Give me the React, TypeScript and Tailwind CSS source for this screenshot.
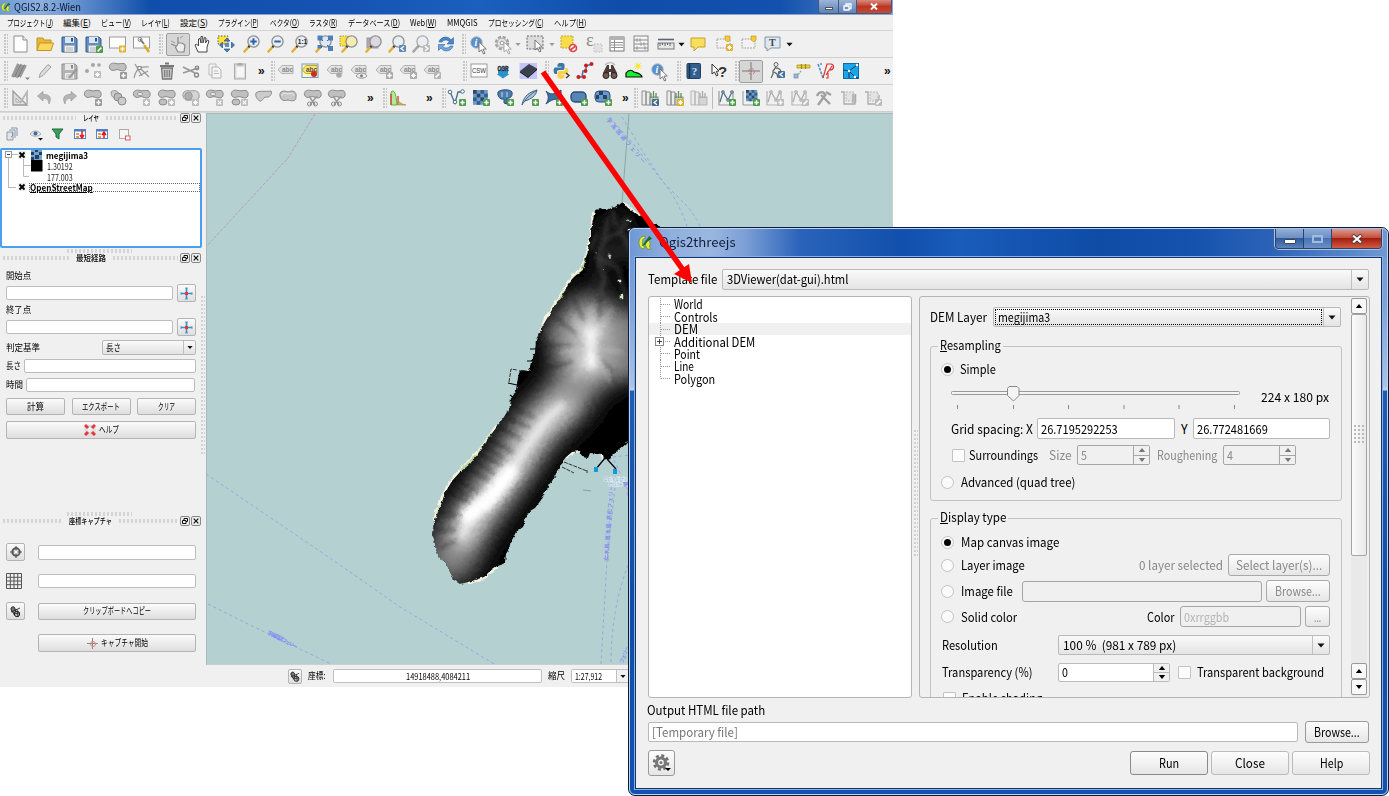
import React, { useLayoutEffect, useRef, useState } from 'react';

/* ---------- text that is fitted to a column width ---------- */
function T({ w, c = '', children }: { w: number; c?: string; children: React.ReactNode }) {
  const ref = useRef<HTMLSpanElement>(null);
  const [s, setS] = useState(1);
  useLayoutEffect(() => {
    if (ref.current) setS(w / ref.current.offsetWidth);
  }, [w]);
  return (
    <span className="inline-block shrink-0 whitespace-nowrap" style={{ width: w }}>
      <span ref={ref} className={'inline-block origin-left ' + c} style={{ transform: `scaleX(${s})` }}>
        {children}
      </span>
    </span>
  );
}

/* ---------- icon parts ---------- */
const Blob = ({ y = 0 }: { y?: number }) => (
  <path transform={`translate(0 ${y})`} d="M3.5 9C2.500 4.500 7 3.500 10 4.500C13 5.500 15 4 18 4.500C21.500 6 20.500 12 17 12C14 12 12 9.500 9 11C7 12 4.500 11.500 3.500 9Z" fill="#c0c0c0" stroke="#8a8a8a" />
);
const Badge = ({ f = '#bdbdbd', x = 14, y = 13, k = '+' }: { f?: string; x?: number; y?: number; k?: string }) => (
  <g transform={`translate(${x} ${y})`}>
    <rect x="0" y="0" width="7" height="7" rx="1" fill={f} />
    {k === '+' && <path d="M3.5 1.3V5.7M1.3 3.5H5.7" stroke="#fff" strokeWidth="1.5" />}
    {k === '*' && <path d="M3.5 1V6M1 3.5H6M1.8 1.8L5.2 5.2M5.2 1.8L1.8 5.2" stroke="#fff" strokeWidth="0.9" />}
    {k === 'x' && <path d="M1.7 1.7L5.3 5.3M5.3 1.7L1.7 5.3" stroke="#fff" strokeWidth="1.2" />}
    {k === '/' && <path d="M1.6 5.4L5.4 1.6" stroke="#fff" strokeWidth="1.5" />}
    {k === '<' && <path d="M5 1.3L2 3.5L5 5.7" stroke="#fff" strokeWidth="1.3" fill="none" />}
    {k === '>' && <path d="M2 1.3L5 3.5L2 5.7" stroke="#fff" strokeWidth="1.3" fill="none" />}
  </g>
);
const Lens = ({ f = '#e9eef2', g = false, x = 0 }: { f?: string; g?: boolean; x?: number }) => (
  <g transform={`translate(${x} 0)`}>
    <path d="M4.5 19.5L9 14.5" stroke={g ? '#a5a5a5' : '#e2b035'} strokeWidth="2.6" strokeLinecap="round" />
    <path d="M8.4 15.2L10 13.5" stroke={g ? '#999' : '#333'} strokeWidth="2.2" />
    <circle cx="13.5" cy="9.5" r="5.6" fill={f} stroke={g ? '#aaa' : '#8c9196'} strokeWidth="1.3" />
  </g>
);
const Tag = ({ f = '#e3e3e3', s = '#b3b3b3', t = '#8a8a8a' }: { f?: string; s?: string; t?: string }) => (
  <g>
    <path d="M4 11L8 6.5H19V14.5H8Z" fill={f} stroke={s} />
    <text x="8" y="13" fontSize="6.5" fontWeight="bold" fill={t}>abc</text>
  </g>
);
const Floppy = ({ g = false }: { g?: boolean }) => (
  <g>
    <path d="M5 5H18L20 7V20H5Z" fill={g ? '#b5b5b5' : '#5f8fc4'} stroke={g ? '#8f8f8f' : '#31588a'} />
    <rect x="8" y="5" width="9" height="6" fill={g ? '#e8e8e8' : '#dce6f0'} />
    <rect x="14" y="6" width="2" height="3.5" fill={g ? '#888' : '#2c5284'} />
    <rect x="7.5" y="13.5" width="10" height="6.5" fill="#eee" stroke="#aaa" strokeWidth="0.7" />
    <path d="M9 16H16M9 18H16" stroke="#999" strokeWidth="0.7" />
  </g>
);
const Arr = ({ c = '#777' }: { c?: string }) => (
  <path d="M10 7L10 17L12.5 14.8L14.5 19L16 18.2L14 14.2L17.3 14Z" fill="#fff" stroke={c} strokeWidth="1" />
);
const VLine = ({ g = false }: { g?: boolean }) => (
  <g fill="none" stroke={g ? '#aaa' : '#4c7088'} strokeWidth="1.2">
    <path d="M4 5V19H18V6" stroke={g ? '#b5b5b5' : '#999'} />
    <path d="M5 16L8 6L13 14L17 6" />
    <circle cx="8" cy="6" r="1.2" fill="#fff" /><circle cx="13" cy="14" r="1.2" fill="#fff" /><circle cx="17" cy="6" r="1.2" fill="#fff" />
  </g>
);
const Books = ({ g = false }: { g?: boolean }) => (
  <g>
    <path d="M4 5H8V19H4ZM8 6H12V19H8Z" fill="#ececec" stroke={g ? '#b5b5b5' : '#8e8e8e'} />
    <rect x="12" y="11" width="8" height="8" fill={g ? '#d5d5d5' : '#bcd0c4'} stroke={g ? '#b5b5b5' : '#8e8e8e'} />
    <path d="M13 12V7M15.5 12V5M18 12V7" stroke={g ? '#aaa' : '#5f8f5c'} strokeWidth="1.3" />
  </g>
);
const Checker = ({ x = 4, y = 4, n = 3.7 }: { x?: number; y?: number; n?: number }) => (
  <g transform={`translate(${x} ${y})`}>
    <rect width={n * 4} height={n * 4} fill="#6d99c9" />
    {[0, 1, 2, 3].map((r) =>
      [0, 1, 2, 3].map((c) => ((r + c) % 2 === 0 ? <rect key={r * 4 + c} x={c * n} y={r * n} width={n} height={n} fill={r === c ? '#2a4668' : '#345f8f'} /> : null)),
    )}
  </g>
);
const G = '#4f9c4c';

const ICONS: Record<string, React.ReactNode> = {
  new: <><path d="M6 4H15L19 8V20H6Z" fill="#fff" stroke="#8c8c8c" /><path d="M15 4V8H19" fill="#eee" stroke="#8c8c8c" /></>,
  open: <><path d="M4 6H10L11 8H18V18.500H4Z" fill="#e9b83a" stroke="#c69420" /><path d="M6.500 11H20.500L18 18.500H4Z" fill="#fbd75c" stroke="#c69420" /></>,
  save: <Floppy />,
  saveas: <><Floppy /><Badge f={G} k="/" x={15} y={14} /></>,
  compose: <><rect x="3.5" y="5" width="16" height="11" fill="#fff" stroke="#999" /><Badge f="#e0b02e" k="*" x={13} y={13.5} /></>,
  composer: <><rect x="3.5" y="5" width="16" height="11" fill="#fff" stroke="#999" /><path d="M10 7L14 12" stroke="#777" strokeWidth="2" /><circle cx="10" cy="7.5" r="2" fill="none" stroke="#888" /><path d="M14 13L19 20" stroke="#dba92c" strokeWidth="2.6" /></>,
  touch: <><path d="M5 12L10 14M12 5V12M12 12L9.500 15.500L12 20H18L19 13L16 11L12.500 11" fill="#eee" stroke="#888" strokeWidth="1.200" /><path d="M5 9L9 11M14 6L17 4" stroke="#999" /></>,
  hand: <path d="M8 20L5 13L6.5 12L8.5 14V7L10 6.5L11 11V4.5L12.7 4.5L13 11L14.5 5.5L16 6L15.5 11L17.5 8L19 9L17 15V20Z" fill="#fff" stroke="#444" />,
  pan: <><rect x="4" y="4" width="10" height="8" fill="#ffe23e" stroke="#555" strokeDasharray="1.5 1.5" /><path d="M13 6L16 9H10ZM13 20L10 17H16ZM5.5 13L8.5 10V16ZM20.5 13L17.5 10V16Z" fill="#4c7cba" stroke="#2d578f" strokeWidth="0.7" /><path d="M11 11h4v4h-4z" fill="#5c8cc9" /></>,
  zin: <><Lens x={1} /><path d="M14.5 6.3V12.7M11.3 9.5H17.7" stroke="#2f62ab" strokeWidth="2" /></>,
  zout: <><Lens x={1} /><path d="M11.3 9.5H17.7" stroke="#2f62ab" strokeWidth="2" /></>,
  z11: <><Lens x={1} /><text x="10.8" y="12" fontSize="6.5" fontWeight="bold" fill="#222">1:1</text></>,
  zfull: <><Lens f="#dfe8f0" /><path d="M5.500 3.500h5v5h-5zM16 3.500h5v5h-5zM16 14h5v5h-5zM5.500 13h3.500v3.500h-3.500z" fill="#4f80bb" /><path d="M9 7l2 2M17 7l-2 2M17 15l-2-2" stroke="#3a6aa5" /></>,
  zsel: <><rect x="4" y="4" width="8" height="10" fill="#ffe23e" stroke="#997" strokeDasharray="1.5 1" /><Lens f="#f5edae" x={2} /></>,
  zlay: <><rect x="6" y="6" width="11" height="10" fill="#b4a6c0" stroke="#999" /><Lens f="#ddd8de" x={1} /></>,
  zlast: <><Lens /><Badge f="#5d88ba" k="<" /></>,
  znext: <><Lens g /><Badge k=">" /></>,
  refresh: <><path d="M5 10C6 5 14 3 17 8L19.5 5.5V12H13L15.3 9.7C13 7 9 8 8 10Z" fill="#4a87c9" stroke="#2d65a5" strokeWidth="0.6" /><path d="M19 14C18 19 10 21 7 16L4.5 18.5V12.5H11L8.7 14.6C11 17 15 16 16 14Z" fill="#73a7dc" stroke="#2d65a5" strokeWidth="0.6" /></>,
  info: <><circle cx="10.5" cy="10.5" r="5.8" fill="#5a90c9" stroke="#b2bfcc" /><text x="8.6" y="14.2" fontSize="10" fontWeight="bold" fontStyle="italic" fill="#fff" fontFamily="Liberation Serif">i</text><g transform="translate(3 3)"><Arr /></g></>,
  action: <><circle cx="11" cy="11" r="6" fill="none" stroke="#a4a4a4" strokeWidth="2.500" strokeDasharray="3.100 1.600" /><circle cx="11" cy="11" r="4.800" fill="#e3e3e3" stroke="#aaa" /><circle cx="11" cy="11" r="1.8" fill="#fff" stroke="#999" /><g transform="translate(3 3)"><Arr c="#aaa" /></g></>,
  select: <><rect x="4" y="4" width="16" height="13" fill="#dcdcdc" stroke="#666" strokeDasharray="2 1.4" /><g transform="translate(2 1)"><Arr /></g></>,
  desel: <><rect x="4" y="4" width="12" height="12" fill="#f8dd4b" stroke="#c5a934" strokeDasharray="2 1" /><circle cx="16" cy="16" r="3.500" fill="#fff" stroke="#da4744" strokeWidth="1.7" /><path d="M13.5 18L18.5 14" stroke="#da4744" strokeWidth="1.7" /></>,
  eps: <><text x="4" y="14" fontSize="18" fill="#8a8a8a" fontFamily="Liberation Serif">ε</text><rect x="12" y="12" width="8" height="8" fill="#e2e2e2" stroke="#bbb" strokeDasharray="1.5 1.5" /></>,
  table: <><rect x="5" y="5" width="14" height="14" fill="#fff" stroke="#777" /><rect x="5" y="5" width="14" height="3" fill="#b2b2b2" /><path d="M6 10.5H18M6 13H18M6 15.5H18M9.5 8V19" stroke="#888" strokeWidth="0.9" /></>,
  abacus: <><rect x="5" y="4" width="14" height="15" fill="#f6f6f6" stroke="#888" /><path d="M5 8H19M5 12H19M5 16H19" stroke="#888" /><path d="M8 6.5v3M11 6.5v3M15 10.5v3M8 14.5v3M16 14.5v3M12 10.5v3" stroke="#aaa" strokeWidth="2" /></>,
  measure: <><path d="M4 7.500H20" stroke="#5b6670" strokeWidth="1.600" /><rect x="4" y="11" width="16" height="6" fill="#e7e7e7" stroke="#777" /><path d="M6 11v3M8.5 11v2M11 11v3M13.5 11v2M16 11v3" stroke="#666" /></>,
  tip: <path d="M5 6H19V15H12L8 19V15H5Z" fill="#f9df5c" stroke="#c4a02c" strokeLinejoin="round" />,
  bmnew: <><rect x="5" y="7" width="13" height="9" fill="#f2f2f2" stroke="#999" strokeDasharray="1.6 1.2" /><path d="M13 4h5v4l-2 2l-3-2z" fill="#f3cb3a" stroke="#bb9420" strokeWidth="0.6" /><Badge f="#e0b02e" k="*" x={14} y={12} /></>,
  bm: <><rect x="5" y="7" width="13" height="9" fill="#f2f2f2" stroke="#999" strokeDasharray="1.6 1.2" /><path d="M14 4h5v4l-2 2l-3-2z" fill="#f3cb3a" stroke="#bb9420" strokeWidth="0.6" /></>,
  tbox: <><path d="M4 5H19V16H10L6 19V16H4Z" fill="#dfe8f0" stroke="#8298ac" /><text x="8" y="14" fontSize="10" fontWeight="bold" fill="#444" fontFamily="Liberation Serif">T</text></>,
  pencils: <><path d="M4.500 18L10.500 5M8 18.500L14 5.500M11.500 18L17.500 6" stroke="#9a9a9a" strokeWidth="3" /><path d="M6.500 18L12.500 5.500M10 18.500L16 6" stroke="#707070" strokeWidth="0.900" /><path d="M17 18.500h5l-2.5 2.5z" fill="#888" /></>,
  pencil: <path d="M6 18.5L7.5 14L15 5.5L18 8L10 16.5Z" fill="#ddd" stroke="#a0a0a0" />,
  gsave: <><Floppy g /><path d="M12 19L20 10" stroke="#999" strokeWidth="2" /></>,
  dots: <><circle cx="6" cy="12" r="2" fill="#a5a5a5" /><circle cx="12" cy="6" r="2" fill="#a5a5a5" /><circle cx="18" cy="6" r="1.8" fill="#a5a5a5" /><Badge k="*" x={13} y={12} /></>,
  blobmove: <><Blob /><Badge f="#999" k="+" /></>,
  node: <><path d="M4 19C6 10 10 7 19 8" fill="none" stroke="#999" strokeWidth="1.2" /><path d="M5 5L12 17M18 12L9 17M11 10L19 18" stroke="#999" strokeWidth="1.3" /><rect x="8" y="7.5" width="3" height="3" fill="#fff" stroke="#888" /></>,
  trash: <><path d="M6.5 9H17.5L16.5 20H7.5Z" fill="#c5c5c5" stroke="#777" strokeWidth="1.3" /><path d="M5 7H19M10 4.5H14" stroke="#777" strokeWidth="2" /><path d="M9.7 11V18M12 11V18M14.4 11V18" stroke="#777" strokeWidth="1.1" /></>,
  cut: <><path d="M4 8L16 14M4 14L19 9" stroke="#999" strokeWidth="1.8" /><circle cx="17.5" cy="16" r="2" fill="none" stroke="#888" strokeWidth="1.4" /><circle cx="18" cy="9" r="1.8" fill="none" stroke="#888" strokeWidth="1.2" /></>,
  copy: <><path d="M6 5H13V16H6Z" fill="#f2f2f2" stroke="#bbb" /><path d="M9 8H15L18 11V19H9Z" fill="#f5f5f5" stroke="#b0b0b0" /><path d="M11 12h4M11 14.5h5" stroke="#bbb" /></>,
  paste: <><rect x="6.5" y="5" width="11" height="15" fill="#ddd" stroke="#aaa" /><rect x="8.5" y="8" width="7.5" height="10" fill="#f6f6f6" /><rect x="9.5" y="4" width="5" height="2.6" fill="#aaa" /></>,
  tag: <Tag />,
  taghl: <><rect x="4" y="5" width="16" height="13.5" fill="#fff6c4" stroke="#6c9ad2" /><Tag f="#f9e36b" s="#c9a527" t="#555" /><circle cx="16" cy="15" r="3" fill="#cf2c24" /></>,
  tagpin: <><Tag /><circle cx="16" cy="16" r="2.8" fill="#aaa" /></>,
  tageye: <><Tag /><path d="M9 17C12 13 18 13 20 17C17 20 12 20 9 17Z" fill="#eee" stroke="#999" /><circle cx="14.5" cy="16.8" r="1.6" fill="#888" /></>,
  tagb: <><Tag /><Badge f="#aaa" k="+" /></>,
  tagr: <><Tag /><Badge f="#aaa" k="*" /></>,
  tagc: <><Tag /><Badge k="/" f="#b5b5b5" /></>,
  csw: <><rect x="4" y="5" width="16" height="13" fill="#fff" stroke="#999" /><text x="5" y="14" fontSize="7" textLength="14" lengthAdjust="spacingAndGlyphs" fill="#333">CSW</text></>,
  ocr: <><path d="M7 11H17V15H18.5L12 19.5L5.500 15H7Z" fill="#2a93cb" /><text x="6.500" y="11.500" fontSize="6.500" fontWeight="bold" textLength="11" lengthAdjust="spacingAndGlyphs" fill="#1b2f45" stroke="#1b2f45" strokeWidth="0.500">OGR</text></>,
  q3js: <><rect x="3.500" y="4" width="17.500" height="16" fill="#c3c5fa" /><path d="M4 12L13 5L21 9.500L12 17.5Z" fill="#39404c" /><path d="M4 12L12 17.5L21 9.500V11L12 19L4 13.5Z" fill="#10141c" /></>,
  python: <><path d="M12 4C8 4 8.5 6 8.5 7.8H12.5V8.5H6.5C4 8.5 4 15 6.5 15H8V12.5Q8 11 10 11H14Q15.5 11 15.5 9V6C15.5 4 13 4 12 4Z" fill="#3b74ab" /><path d="M12 19.8C15.5 19.8 15.5 18 15.5 16H12V15.3H17.5C20 15.3 20 9 17.5 9H16.3V10.5Q16 12 14 12H10.5Q8.5 12 8.5 14V17.5C8.5 19.5 11 19.8 12 19.8Z" fill="#fbd244" /><path d="M17 14L20 16.5L17 19" fill="none" stroke="#333" strokeWidth="1.3" /></>,
  road: <><path d="M5 18H9L10 12H13L13 7L19 5" fill="none" stroke="#4d76b0" strokeWidth="1.6" /><circle cx="5.5" cy="18" r="2.1" fill="#c9201d" /><circle cx="11" cy="18" r="2" fill="#c9201d" /><circle cx="12.5" cy="12" r="2" fill="#c9201d" /><circle cx="13" cy="6.5" r="2" fill="#c9201d" /><circle cx="18.5" cy="5" r="2" fill="#c9201d" /></>,
  bino: <><path d="M9 6H11V10H13V6H15L19 14V18H13V13H11V18H5V14Z" fill="#4b3a35" /><circle cx="8" cy="16.5" r="3" fill="#735a50" stroke="#222" /><circle cx="16" cy="16.5" r="3" fill="#735a50" stroke="#222" /><path d="M7 6C10 3 14 3 17 6" stroke="#bbb" fill="none" strokeWidth="1.5" /></>,
  hill: <><path d="M4 18V14C7 10 10 11 12 13C14 14 19 14 20 18Z" fill="#15f12c" stroke="#111" strokeWidth="1.2" /><circle cx="16" cy="7" r="2.2" fill="#ffe637" /><path d="M16 3v8M12 7h8M13 4l6 6M19 4l-6 6" stroke="#ffe637" strokeWidth="0.8" /></>,
  help: <><rect x="5" y="4.5" width="13.5" height="15" rx="1" fill="#34608f" stroke="#1f3f63" /><path d="M7.5 5V19" stroke="#16324f" strokeWidth="1.5" /><text x="9.7" y="16" fontSize="11" fontWeight="bold" fill="#cfe0f2" fontFamily="Liberation Serif">?</text></>,
  whats: <><path d="M5 5V15L7.5 13L9.5 17L11 16L9.3 12.3L12 12Z" fill="#fff" stroke="#333" /><text x="11" y="18" fontSize="15" fontWeight="bold" fill="#333">?</text></>,
  cross: <><path d="M12 3V21M3 12H21" stroke="#777" /><circle cx="12.5" cy="12.5" r="3" fill="none" stroke="#d9706c" strokeDasharray="3 1.500" /></>,
  person: <><circle cx="11" cy="5.5" r="2" fill="none" stroke="#666" /><path d="M11 8L8 12V15L6 19M11 9C15 9 16 12 16 13M9 13L12 15L13 19" fill="none" stroke="#666" strokeWidth="1.3" /><Badge f="#47729b" k="<" x={13} y={12} /></>,
  gps: <><path d="M7 6H20V9H7Z" fill="#efd336" stroke="#a18b1a" strokeWidth="0.700" /><path d="M11.500 5V10M15.500 5V10" stroke="#a18b1a" strokeWidth="1.200" /><path d="M11 12L7 17" stroke="#8aa" strokeWidth="1.5" strokeDasharray="1.5 1" /><rect x="4" y="15" width="4" height="4" fill="#9db9d6" stroke="#6688a8" strokeWidth="0.700" /></>,
  trace: <><path d="M4 5L9 19M6 5H8" fill="none" stroke="#4c8ac5" strokeWidth="1.500" strokeDasharray="3 1" /><path d="M9 19L13 5H17C21 6 20 11 16 11M12 16L18 7M12 19H14V12" fill="none" stroke="#d9372f" strokeWidth="1.200" /></>,
  topo: <><rect x="4.5" y="4.5" width="15" height="15" fill="#1ba5ed" stroke="#126d9f" /><path d="M4.5 11L10 12L19.5 5M10 12L16 18L19 19M10 19L10 12" fill="none" stroke="#0d3957" /><circle cx="10" cy="12" r="1.2" fill="#fff" /><circle cx="16" cy="18" r="1.2" fill="#fff" /><circle cx="18" cy="6" r="1.2" fill="#fff" /></>,
  ruler: <><path d="M5 5V19H19Z" fill="#dcdcdc" stroke="#999" strokeWidth="1.3" /><path d="M8 12V16H12Z" fill="#f0f0f0" stroke="#aaa" /><path d="M12 17L19 6V18" stroke="#b5b5b5" strokeWidth="1.800" fill="none" /></>,
  undo: <path d="M4.5 10L10 5.5V8.5C17 8 19 12 16 18C15.5 14 14 12.3 10 12.3V15Z" fill="#b5b5b5" stroke="#999" strokeWidth="0.7" />,
  redo: <path d="M19.5 10L14 5.5V8.5C7 8 5 12 8 18C8.5 14 10 12.3 14 12.3V15Z" fill="#b5b5b5" stroke="#999" strokeWidth="0.7" />,
  b1: <><Blob /><Badge f="#999" /></>,
  b2: <><path d="M5 6C8 3 13 5 13 9C13 14 5 14 5 6Z" fill="#ccc" stroke="#999" /><circle cx="12" cy="11" r="4" fill="#bbb" stroke="#888" /><circle cx="16" cy="15" r="4" fill="#ccc" stroke="#888" /></>,
  b3: <><Blob /><ellipse cx="10" cy="8" rx="2.6" ry="1.6" fill="#f0f0f0" stroke="#999" /><Badge k="*" x={13} /></>,
  b4: <><Blob /><ellipse cx="8" cy="16" rx="4" ry="3" fill="#c0c0c0" stroke="#8a8a8a" /><Badge k="*" x={13} /></>,
  b5: <><path d="M4 10C3 5 8 4 12 5C16 4 21 5 20 11C20 14 15 14 12 14C8 15 5 14 4 10Z" fill="#d5d5d5" stroke="#999" /><circle cx="9.500" cy="10" r="3.800" fill="#b0b0b0" stroke="#999" /><Badge k="*" x={13} /></>,
  b6: <><Blob /><ellipse cx="10" cy="8" rx="2.6" ry="1.6" fill="#f0f0f0" stroke="#999" /><Badge k="x" x={13} /></>,
  b7: <><Blob /><ellipse cx="8" cy="16" rx="4" ry="3" fill="#c0c0c0" stroke="#8a8a8a" /><Badge k="x" x={13} /></>,
  b8: <><path d="M4 7C8 4 12 6 19 5C21 8 17 12 14 11C11 11 10 17 7 14.500C5 13 3 10 4 7Z" fill="#ccc" stroke="#8a8a8a" /></>,
  b9: <><path d="M4 10C3 5 8 4 12 6C16 4 21 5 20 11C20 16 15 15 12 14C8 15 5 15 4 10Z" fill="#c6c6c6" stroke="#8a8a8a" /><path d="M6 10C6 7 9 7 12 8C16 7 18 8 18 10" fill="none" stroke="#eee" /></>,
  b10: <><Blob /><path d="M8 10L14 19M16 10L9 19" stroke="#999" strokeWidth="1.5" /><circle cx="8.5" cy="18" r="2" fill="none" stroke="#888" /><circle cx="14.5" cy="18" r="2" fill="none" stroke="#888" /></>,
  hist: <><path d="M5 19V6C8 3 10 7 11 19Z" fill="#b7e79f" stroke="#53b935" /><path d="M5 19V8M12 19V10" stroke="#dd3730" strokeWidth="1.3" /><path d="M12 16C14 15 14 18 20 19H12Z" fill="#8fd45f" stroke="#dd6a30" strokeWidth="0.600" /></>,
  addv: <><path d="M5 6L10 17L13 6H17" fill="none" stroke="#446d8b" strokeWidth="1.3" /><circle cx="5" cy="6" r="1.8" fill="#fff" stroke="#446d8b" /><circle cx="10" cy="16" r="1.8" fill="#fff" stroke="#446d8b" /><circle cx="17.500" cy="5.5" r="1.8" fill="#fff" stroke="#446d8b" /><Badge f={G} /></>,
  addr: <><Checker /><Badge f={G} /></>,
  addp: <><path d="M5 6C8 3 17 3 19 6C20 10 17 13 14 12V18L11 17V13C7 14 4 10 5 6Z" fill="#4c7caf" stroke="#274f7c" /><path d="M9 6V11M14 6V11" stroke="#c7d9ea" /><Badge f={G} /></>,
  adds: <><path d="M4 19C6 9 12 6 19 4C18 10 13 13 7 15" fill="#a9c2d8" stroke="#3f6587" /><path d="M4 19C8 12 13 8 19 4" fill="none" stroke="#3f6587" /><Badge f={G} /></>,
  addm: <><path d="M4 5C8 9 12 9 19 4V14C13 12 9 14 4 18C7 13 7 10 4 5Z" fill="#3f6f9f" stroke="#244b73" /><Badge f={G} /></>,
  addo: <><rect x="4" y="6" width="15" height="10" rx="4" fill="#5784b5" stroke="#2a4f7a" strokeWidth="1.4" /><Badge f={G} /></>,
  addw: <><g><rect x="4" y="5" width="15" height="11" rx="4" fill="#6b98c8" stroke="#2a4f7a" /><path d="M8 5h4v4h-4zM12 9h4v4h-4zM5 9h3v4h-3z" fill="#274567" /></g><Badge f={G} /></>,
  bk1: <><Books /><Badge f="#456b90" k="<" /></>,
  bk2: <><Books /><Badge f="#e0b02e" k="*" /></>,
  bk3: <Books g />,
  v1: <><VLine /><Badge f={G} /></>,
  v2: <><path d="M4 5V19H18V6" stroke="#999" fill="none" /><Checker x={7} y={4} n={2.8} /><Badge f={G} /></>,
  v3: <><VLine g /><Badge /></>,
  v4: <><VLine g /><Badge k="/" /></>,
  tools: <path d="M6 19L14 8M9 9L18 18M5 10C7 5 12 5 13 9M14 6L19 9" fill="none" stroke="#a0a0a0" strokeWidth="2.4" />,
  r1: <><path d="M4 6H7V18H18V9" fill="none" stroke="#aaa" strokeWidth="1.3" /><path d="M9 6h8v9h-8z" fill="#e2e2e2" stroke="#bbb" strokeDasharray="2 1" /><path d="M16 8v9M18.5 8v9" stroke="#aaa" strokeWidth="1.5" /></>,
  r2: <><path d="M4 6H7V18H18V9" fill="none" stroke="#aaa" strokeWidth="1.3" /><path d="M9 6h8v9h-8z" fill="#e2e2e2" stroke="#bbb" strokeDasharray="2 1" /><Badge k="/" /></>,
  more: <text x="9" y="15.500" fontSize="12" fontWeight="bold" fill="#111">»</text>,
};

function I({ k, c = 'w-[24.4px]', on = false }: { k: string; c?: string; on?: boolean }) {
  return (
    <span className={'flex h-6 shrink-0 items-center justify-center ' + c}>
      <span className={on ? 'flex h-[23px] w-[24px] items-center justify-center rounded-[2px] border border-[#a0a0a0] bg-[#d6d6d6]' : 'flex'}>
        <svg width="22" height="22" viewBox="1 1 22 22" className="shrink-0" fontFamily="Liberation Sans">{ICONS[k]}</svg>
      </span>
    </span>
  );
}
const Dd = ({ g = false, c = 'w-2' }: { g?: boolean; c?: string }) => (
  <svg viewBox="0 0 8 5" className={'h-[5px] shrink-0 ' + c}><path d="M0.5 0.5H7.5L4 4.5Z" fill={g ? '#999' : '#111'} /></svg>
);
const Grip = ({ c = 'w-[12px] pl-1' }: { c?: string }) => (
  <span className={'flex h-6 shrink-0 items-center ' + c}>
    <span className="h-[20px] w-[4px] shrink-0 bg-[radial-gradient(circle_at_1px_1px,#c6c6c6_0.7px,transparent_1px)] bg-[length:3px_3px]" />
  </span>
);
const Bar = ({ children }: { children: React.ReactNode }) => (
  <div className="flex h-[27px] items-center overflow-hidden border-b border-[#cfcfcf] bg-[#f0f0f0] pl-[4px]">{children}</div>
);
const seq = (s: string) => s.split(' ').map((k, i) => <I key={i} k={k} />);

const QLogo = ({ c }: { c: string }) => (
  <svg viewBox="0 0 16 16" className={'shrink-0 ' + c}>
    <path d="M7 1C1 2 0 8 2 12C3 15 7 15 8 13C5 13 4 9 5 6C5 4 7 3 8 3Z" fill="#e4ee3c" stroke="#6b8c1c" strokeWidth="0.8" />
    <path d="M8 6C13 5 14 9 12 12L14 15H10L8 11Z" fill="#e4ee3c" stroke="#6b8c1c" strokeWidth="0.8" />
    <path d="M4 12L12 1L15 4L11 6L8 10Z" fill="#1d6b2c" />
  </svg>
);

const MENU: [string, string, number, number][] = [
  ['プロジェクト', 'J', 46, 10], ['編集', 'E', 28, 10], ['ビュー', 'V', 30, 10], ['レイヤ', 'L', 29, 10], ['設定', 'S', 28, 10],
  ['プラグイン', 'P', 41, 11], ['ベクタ', 'O', 29, 10], ['ラスタ', 'R', 29, 10], ['データベース', 'D', 52, 10], ['Web', 'W', 27, 10],
  ['MMQGIS', '', 31, 10], ['プロセッシング', 'C', 56, 10], ['ヘルプ', 'H', 32, 10],
];

/* ---------- dock widgets ---------- */
const Dots = () => <span className="h-[4px] flex-1 bg-[radial-gradient(circle_at_1px_1px,#cacaca_0.6px,transparent_1px)] bg-[length:4px_2px]" />;
const Dock = ({ t, w, c }: { t: string; w: number; c: string }) => (
  <div className={'flex h-[12px] w-[201px] items-center gap-[7px] pl-[3px] text-[8px] leading-[12px] ' + c}>
    <Dots /><T w={w} c="font-medium">{t}</T><Dots />
    <span className="-ml-[5px] flex gap-px">
      <svg width="10" height="10" viewBox="0 0 10 10"><rect x="0.5" y="0.5" width="9" height="9" rx="1.5" fill="#eee" stroke="#888" /><path d="M4 4V2.5H7.5V5.5H6M2.5 4.5H6V7.5H2.5Z" fill="none" stroke="#111" /></svg>
      <svg width="10" height="10" viewBox="0 0 10 10"><rect x="0.5" y="0.5" width="9" height="9" rx="1.5" fill="#eee" stroke="#888" /><path d="M2.7 2.7L7.3 7.3M7.3 2.7L2.7 7.3" stroke="#111" strokeWidth="1.2" /></svg>
    </span>
  </div>
);
const Inp = ({ c }: { c: string }) => <div className={'shrink-0 rounded-[2px] border border-[#bdbdbd] bg-white ' + c} />;
const SBtn = ({ c, children }: { c: string; children: React.ReactNode }) => (
  <div className={'flex shrink-0 items-center justify-center rounded-[2px] border border-[#b4b4b4] bg-gradient-to-b from-[#fbfbfb] to-[#dedede] ' + c}>{children}</div>
);
const Plus = () => (
  <svg width="13" height="13" viewBox="0 0 13 13"><path d="M6.5 1V12M1 6.5H12" stroke="#3d8fcb" strokeWidth="1.7" /><path d="M5 1H8M5 12H8M1 5V8M12 5V8" stroke="#3d8fcb" strokeWidth="0.8" /><rect x="5" y="5" width="3" height="3" fill="#e33" /></svg>
);
const Mouse = () => (
  <svg width="13" height="13" viewBox="0 0 13 13"><path d="M2 4C2 1 6 1 6 4L7 8C6 10 3 8 2 4Z" fill="#777" stroke="#222" /><circle cx="8" cy="9" r="2.7" fill="#bbb" stroke="#222" /><path d="M2 7L11 3M4 9L11 8M8 4L9 12" stroke="#222" strokeWidth="0.8" /></svg>
);

function LeftPanel() {
  return (
    <div className="flex h-full w-[206px] shrink-0 flex-col text-[9px] leading-[12px]">
      <Dock t="レイヤ" w={16} c="-mt-px" />
      <div className="flex h-[20px] items-center pl-[2px]">
        <svg width="140" height="16" viewBox="2 0 140 16">
          <path d="M7 6H13V14H7Z" fill="#dce4ec" stroke="#999" /><path d="M9 4H15V12M11 2H17V10M11 11C13 11 13 8 12 6" fill="none" stroke="#8295a8" />
          <path d="M30 8C33 4 38 4 41 8C38 11 33 11 30 8Z" fill="#e3e8ee" stroke="#aaa" /><circle cx="35.5" cy="7.5" r="2" fill="#3f6e9d" /><path d="M38 12h5l-2.500 2.500z" fill="#111" />
          <path d="M52 3H63L59 8V13L56 11V8Z" fill="#3da05a" stroke="#216b39" />
          <rect x="74.500" y="3.500" width="11" height="9" fill="#fff" stroke="#5783c4" /><path d="M75 4.500H85" stroke="#4a7cc7" strokeWidth="2" /><path d="M76 8h3M76 11h3" stroke="#e27a2b" strokeWidth="1.500" /><path d="M82 5V10M80 9L82 12L84 9" stroke="#e11" strokeWidth="1.500" fill="none" />
          <rect x="96.500" y="3.500" width="11" height="9" fill="#fff" stroke="#5783c4" /><path d="M97 4.500H107" stroke="#4a7cc7" strokeWidth="2" /><path d="M98 8h3M98 11h3" stroke="#e27a2b" strokeWidth="1.500" /><path d="M104 12V7M102 9L104 6L106 9" stroke="#e11" strokeWidth="1.500" fill="none" />
          <rect x="119.500" y="3.500" width="9" height="9" fill="#f5f5f5" stroke="#aaa" /><rect x="125.500" y="10" width="4.500" height="4" fill="#fff" stroke="#dd5c5c" />
        </svg>
      </div>
      <div className="mt-[4px] flex h-[100px] w-[202px] flex-col rounded-[2px] border-2 border-[#4aa0f0] bg-white text-[8.500px] leading-[11px]">
        <div className="flex">
          <svg width="42" height="43" viewBox="0 0 42 43" className="shrink-0">
            <path d="M6.500 7V38M6.500 37.500H14M9 4.500H16M21.500 9V26.500M21.500 15.500H29M21.500 26.500H27" stroke="#bbb" fill="none" />
            <rect x="3.500" y="1.500" width="6" height="6" fill="#fff" stroke="#999" /><path d="M5 4.500H8" stroke="#444" />
            <rect x="16" y="1" width="8" height="8" fill="#f0f0f0" /><path d="M17.500 2.500L22.500 7.500M22.500 2.500L17.500 7.500" stroke="#000" strokeWidth="1.900" />
            <rect x="16" y="33" width="8" height="8" fill="#f0f0f0" /><path d="M17.500 34.500L22.500 39.500M22.500 34.500L17.500 39.500" stroke="#000" strokeWidth="1.900" />
            <g transform="translate(29 -1)"><rect width="11" height="11" fill="#79a2cc" /><path d="M0 3h3v3h-3zM4 0h3v3h-3zM4 6h4v4h-4zM8 3h3v3h-3zM0 8h3v3h-3z" fill="#24405f" /></g>
            <rect x="29" y="10" width="11.500" height="11.500" fill="#000" />
          </svg>
          <div className="-ml-[15px] flex flex-col">
            <span className="flex h-[11px] pl-[17px]"><T w={42} c="font-bold">megijima3</T></span>
            <span className="flex h-[11px] pl-[18px] text-[#222]"><T w={26}>1.30192</T></span>
            <span className="flex h-[11px] pl-[18px] text-[#222]"><T w={26}>177.003</T></span>
            <span className="flex h-[9px] w-[171px] items-center border border-dotted border-[#666]"><T w={63} c="font-bold underline">OpenStreetMap</T></span>
          </div>
        </div>
      </div>
      <div className="mt-px flex h-[3px] pl-[67px] pr-[74px]"><Dots /></div>
      <Dock t="最短経路" w={30} c="" />
      <div className="flex h-[191px]">
        <div className="flex w-[201px] flex-col pl-[6px]">
          <div className="mt-[6px] h-[12px]"><T w={25}>開始点</T></div>
          <div className="mt-[2px] flex items-center gap-[4px]"><Inp c="h-[14px] w-[167px]" /><SBtn c="h-[18px] w-[19px]"><Plus /></SBtn></div>
          <div className="mt-[2px] h-[12px]"><T w={25}>終了点</T></div>
          <div className="mt-[2px] flex items-center gap-[4px]"><Inp c="h-[14px] w-[167px]" /><SBtn c="h-[18px] w-[19px]"><Plus /></SBtn></div>
          <div className="mt-[4px] flex items-center">
            <T w={34}>判定基準</T>
            <div className="ml-[62px] flex h-[15px] w-[94px] items-center justify-between rounded-[2px] border border-[#b9b9b9] bg-gradient-to-b from-[#fafafa] to-[#e2e2e2] pl-[3px]">
              <T w={15}>長さ</T><span className="flex h-full w-[12px] items-center justify-center border-l border-[#c0c0c0]"><Dd c="w-[6px]" /></span>
            </div>
          </div>
          <div className="mt-[4px] flex h-[14px] items-center gap-[3px]"><T w={15}>長さ</T><Inp c="h-[14px] w-[172px]" /></div>
          <div className="mt-[5px] flex h-[14px] items-center gap-[3px]"><T w={17}>時間</T><Inp c="h-[14px] w-[169px]" /></div>
          <div className="mt-[6px] flex justify-between pr-[5px]">
            <SBtn c="h-[17px] w-[59px]"><T w={17}>計算</T></SBtn><SBtn c="h-[17px] w-[59px]"><T w={38}>エクスポート</T></SBtn><SBtn c="h-[17px] w-[59px]"><T w={17}>クリア</T></SBtn>
          </div>
          <SBtn c="mt-[6px] h-[18px] w-[190px] gap-[3px]">
            <svg width="12" height="12" viewBox="0 0 12 12"><circle cx="6" cy="6" r="4" fill="none" stroke="#ddd" strokeWidth="3" /><path d="M1 1L4 4M11 1L8 4M1 11L4 8M11 11L8 8" stroke="#e8373a" strokeWidth="3" /></svg>
            <T w={20}>ヘルプ</T>
          </SBtn>
        </div>
        <span className="mt-[32px] h-[159px] w-[4px] bg-[radial-gradient(circle_at_1px_1px,#c6c6c6_0.6px,transparent_1px)] bg-[length:3px_4px]" />
      </div>
      <div className="mt-[57px] flex h-[3px] pl-[67px] pr-[74px]"><Dots /></div>
      <Dock t="座標キャプチャ" w={43} c="mt-0" />
      <div className="flex flex-col pl-[6px]">
        <div className="mt-[16px] flex items-center"><SBtn c="h-[18px] w-[19px]"><svg width="12" height="12" viewBox="0 0 12 12"><circle cx="6" cy="6" r="3.800" fill="#ccc" stroke="#555" strokeWidth="1.800" /><path d="M6 0V12M0 6H12" stroke="#555" strokeWidth="1.200" /><rect x="4.500" y="4.500" width="3" height="3" fill="#fff" /></svg></SBtn><Inp c="ml-[13px] h-[15px] w-[158px]" /></div>
        <div className="mt-[12px] flex items-center"><svg width="16" height="16" viewBox="0 0 16 16"><path d="M.5 .5H15.500V15.500H.5ZM4.300 0V16M8 0V16M11.700 0V16M0 4.300H16M0 8H16M0 11.700H16" fill="none" stroke="#555" /></svg><Inp c="ml-[16px] h-[14px] w-[158px]" /></div>
        <div className="mt-[13px] flex items-center"><SBtn c="h-[18px] w-[19px]"><Mouse /></SBtn><SBtn c="ml-[13px] h-[17px] w-[158px]"><T w={68}>クリップボードへコピー</T></SBtn></div>
        <SBtn c="ml-[32px] mt-[14px] h-[18px] w-[158px] gap-[3px]"><svg width="11" height="11" viewBox="0 0 11 11"><path d="M5.500 0V11M0 5.500H11" stroke="#888" /><circle cx="6" cy="6" r="2.500" fill="none" stroke="#dc8683" /></svg><T w={47}>キャプチャ開始</T></SBtn>
      </div>
    </div>
  );
}

/* ---------- map ---------- */
const ISLE = 'M595 211L600 208L605 210L611 208L616 207L620 204L623 202L628 208L636 214L650 222L690 240V425L640 432L633 441L626 443L618 450L610 458L604 461L603 454L590 453L588 458L582 457L580 451L572 452L565 458L560 468L557 472L551 483L545 492L541 500L535 508L530 511L526 517L523 527L516 532L511 542L509 549L506 554L505 563L497 566L490 571L484 577L475 580L468 582L460 584L454 580L450 572L446 563L440 558L436 550L434 540L432 534L434 522L441 505L445 493L452 481L460 472L470 464L478 454L487 440L496 428L504 417L510 407L511 398L516 390L519 372L521 370L529 371L531 362L535 352L536 340L542 327L552 310L562 297L568 284L574 277L583 270L588 250L592 225Z';
function MapView() {
  return (
    <svg className="block h-[552px] w-[687px] bg-[#b5d0d0]" viewBox="206 113 687 552">
      <defs>
        <clipPath id="isle"><path d={ISLE} /></clipPath>
        <filter id="b2" x="-50%" y="-50%" width="200%" height="200%"><feGaussianBlur stdDeviation="2" /></filter>
        <filter id="b4" x="-50%" y="-50%" width="200%" height="200%"><feGaussianBlur stdDeviation="3.5" /></filter>
        <filter id="b7" x="-50%" y="-50%" width="200%" height="200%"><feGaussianBlur stdDeviation="8" /></filter>
        <filter id="b14" x="-50%" y="-50%" width="200%" height="200%"><feGaussianBlur stdDeviation="12" /></filter>
        <filter id="rough" x="-5%" y="-5%" width="110%" height="110%">
          <feTurbulence type="fractalNoise" baseFrequency="0.25" numOctaves="2" seed="4" result="n" />
          <feDisplacementMap in="SourceGraphic" in2="n" scale="3.5" xChannelSelector="R" yChannelSelector="G" />
        </filter>
      </defs>
      <path d="M315 114L288 158L206 247" fill="none" stroke="#b49cc6" strokeDasharray="3 1.500" />
      <g fill="none" stroke="#96a6e0" strokeDasharray="3 3">
        <path d="M610 117L635 146L663 182Q690 215 697 270" />
        <path d="M622 117L645 155L663 182L686 205Q704 225 712 262" />
        <path d="M206 474L330 558L400 607L496 665" />
        <path d="M208 604L250 625L331 664" />
        <path d="M617 470L607 560L601 664" />
        <path d="M628 565Q611 610 611 664" />
        <path d="M613 457L630 455M614 460L628 490" />
      </g>
      <path d="M629 113L622 203" stroke="#8ea5a6" />
      <g fill="#7c82f4" fontFamily="Noto Sans CJK JP" fontSize="5.500" fontWeight="500">
        <text transform="translate(606 120) rotate(50)" textLength="57">宇高国道フェリー</text>
        <text transform="translate(267 634) rotate(27)" textLength="33">宇高国道フェリー</text>
        <text transform="translate(608 561) rotate(-86)" textLength="76">女木島-男木島-高松フェリー</text>
        <text transform="translate(623 482) rotate(70)" textLength="16">高松</text>
        <text transform="translate(623 664) rotate(-70)" textLength="18">フェリー</text>
      </g>
      <g filter="url(#rough)">
        <path d="M594 212L591 235L587 254L582 269L573 276L560 297L545 320L540 335M497 426L480 450L459 472L448 486L438 508L435 520M623 203L640 217M468 583L485 577L497 567M566 457L574 451L582 451M602 460L603 454" fill="none" stroke="#f4f2e2" strokeWidth="3.500" />
        <path d="M587 256L582 271L573 278L556 305L548 320M492 433L478 454L460 471M440 505L437 515" fill="none" stroke="#b7d59c" strokeWidth="2" />
        <path d={ISLE} fill="#000" />
        <g clipPath="url(#isle)">
          <g filter="url(#b14)" fill="none" strokeLinecap="round">
            <path d="M452 558L468 525L500 482L535 430L570 395" stroke="#8c8c8c" strokeWidth="48" />
            <ellipse cx="590" cy="343" rx="38" ry="48" fill="#a8a8a8" />
            <ellipse cx="640" cy="345" rx="26" ry="36" fill="#777" />
          </g>
          <g filter="url(#b7)" fill="none" strokeLinecap="round">
            <path d="M463 536L480 508L510 472L535 432L565 404" stroke="#cfcfcf" strokeWidth="24" />
            <ellipse cx="591" cy="346" rx="16" ry="26" fill="#e8e8e8" />
            <path d="M591 350L552 330M591 350L628 370M591 350L625 325M577 385L562 405" stroke="#8d8d8d" strokeWidth="9" />
            <path d="M605 220L600 290M622 215L638 265M600 260L628 250" stroke="#3a3a3a" strokeWidth="8" />
          </g>
          <g filter="url(#b4)" fill="none" strokeLinecap="round">
            <path d="M462 536L470 516L488 500L510 472L530 442L548 417L562 405" stroke="#f4f4f4" strokeWidth="6" />
            <path d="M468 516L490 498L510 472" stroke="#fff" strokeWidth="17" />
            <path d="M591 332V364" stroke="#fff" strokeWidth="9" />
          </g>
          <g filter="url(#b2)" fill="none" strokeLinecap="round">
            <path d="M591 348L572 315M591 348L612 308M591 348L562 352M591 348L622 352M591 348L610 382M591 348L574 380M591 348L591 305" stroke="#ddd" strokeWidth="2" opacity="0.500" />
            <path d="M608 218L604 240L598 258L605 280M604 240L620 232L628 218M620 232L640 262M598 258L618 268L622 285M590 250L596 235M612 210L616 226M604 280L600 296M622 285L628 300" stroke="#555" strokeWidth="2.500" opacity="0.700" />
            <g stroke="#111" strokeWidth="2" opacity="0.550">
              <path d="M508 418L528 427M500 428L520 438M490 440L512 452M480 454L500 464M468 468L488 480M458 480L476 491M450 493L468 501M442 512L460 516M438 530L455 530M440 548L456 541M575 300L583 320M600 295L600 318M556 318L577 334M545 345L572 346M548 368L572 362M612 372L602 360M516 408L534 418M484 446L503 458M474 461L492 472M455 487L470 496" />
            </g>
          </g>
          <path d="M627 220l4 2v-2zM608 255l2 4l1-4zM603 269l1 1M619 280h2v2h-2zM620 295h3v4h-3zM595 253h1M629 229h5v2h-5z" fill="#cfe8c8" stroke="#cfe8c8" strokeWidth="0.500" />
        </g>
      </g>
      <path d="M530 349H535M527 361H532M508 383L517 385M510 395L514 398M605 458L596 469M607 459L616 469M622 446L630 441" fill="none" stroke="#000" strokeWidth="1.200" />
      <path d="M509 382L511 369L517 370M564 462L587 471M562 467L574 473M587 473V470" fill="none" stroke="#333" strokeDasharray="4 1" />
      <rect x="594" y="467" width="4" height="5" fill="#159ad8" /><rect x="613" y="469" width="4" height="5" fill="#159ad8" />
      <g fontSize="5" fill="#79a3cb" stroke="#e7f2f5" strokeWidth="1.200" paintOrder="stroke" fontFamily="Liberation Sans"><text x="604" y="481" textLength="22">Ogi-s Light</text><text x="609" y="486" textLength="13">House</text></g>
      <path d="M583 490L591 491" stroke="#999" />
      <path d="M892.500 113V665M206 664.500H893" stroke="#c9d0d0" /><path d="M206.500 113V665M206 113.500H893" stroke="#a9b8b8" />
    </svg>
  );
}

/* ---------- main window ---------- */
function MainWindow() {
  return (
    <div className="flex h-[687px] w-[893px] flex-col bg-[#f0f0f0] text-black">
      <div className="flex h-[15px] items-center border-b border-[#8ba4c7] bg-[linear-gradient(90deg,#6f9bd4_0px,#8db0de_40px,#5585c8_90px,#0f4eaa_150px,#1554b2_350px,#1b60be_480px,#0e4da8_620px,#1251ad_780px,#4b7dc4_860px,#8aabdb_893px)]">
        <QLogo c="ml-px h-[12px] w-[10px]" />
        <span className="ml-[3px] text-[10px] leading-[14px]"><T w={67} c="text-[#0a1530]">QGIS2.8.2-Wien</T></span>
        <div className="ml-auto mr-px flex h-[14px] self-start overflow-hidden rounded-b-[3px] border border-t-0 border-[#43597c]">
          <span className="flex w-[20px] items-center justify-center border-r border-[#43597c] bg-gradient-to-b from-[#9db5d8] to-[#5d81b8]"><span className="mt-[3px] h-[3px] w-[8px] border border-[#555] bg-white" /></span>
          <span className="flex w-[18px] items-center justify-center border-r border-[#43597c] bg-gradient-to-b from-[#9db5d8] to-[#5d81b8]"><svg width="9" height="8" viewBox="0 0 9 8"><path d="M3 2.500V1H8V5.500H6.500M1 3H6V7H1Z" fill="none" stroke="#fff" strokeWidth="1.300" /></svg></span>
          <span className="flex w-[34px] items-center justify-center bg-gradient-to-b from-[#d98b80] via-[#bb3627] to-[#c24a33]"><svg width="8" height="7" viewBox="0 0 8 7"><path d="M1 .5L7 6.500M7 .5L1 6.500" stroke="#fff" strokeWidth="1.900" /></svg></span>
        </div>
      </div>
      <div className="flex h-[16px] items-center border-b border-[#d5d5d5] pb-px pl-[7px] text-[8.500px] leading-[14px]">
        {MENU.map(([t, k, w, g]) => (
          <span key={t} className="flex" style={{ marginRight: g }}>
            <T w={w}>{t}{k && <>(<u>{k}</u>)</>}</T>
          </span>
        ))}
      </div>
      <Bar>
        <Grip c="w-[4px]" />
        {seq('new open save saveas compose composer')}
        <Grip c="w-[11px] pl-[5px]" /><I k="touch" on />
        {seq('hand pan zin zout z11 zfull zsel zlay zlast znext refresh')}
        <Grip c="w-[8px] pl-[4px]" /><I k="info" /><I k="action" /><Dd g c="w-[6px]" /><I k="select" c="w-[28px]" /><Dd g c="w-[6px]" /><I k="desel" c="w-[28px]" /><I k="eps" c="w-[22px]" />{seq('table abacus measure')}<Dd c="w-[7px]" />
        <I k="tip" c="w-[27px]" />{seq('bmnew bm tbox')}<Dd c="ml-px w-[7px]" />
      </Bar>
      <Bar>
        <Grip c="w-[4px]" />
        {seq('pencils pencil gsave dots blobmove node trash cut copy paste')}<I k="more" c="w-[19px]" /><Grip c="w-[3px]" />
        {seq('tag taghl tagpin tageye tagb tagr tagc')}
        <Grip c="w-[22px] pl-[18px]" />{seq('csw ocr q3js')}<Grip c="w-[9px] pl-[5px]" />{seq('python road bino hill info')}<Grip c="w-[11px] pl-[6px]" /><I k="help" /><I k="whats" c="w-[26px]" />
        <Grip c="w-[6px] pl-[3px]" /><I k="cross" on c="w-[25.4px]" /><I k="person" c="w-[26px]" />{seq('gps trace topo')}<I k="more" c="ml-auto w-[12px]" />
      </Bar>
      <Bar>
        <Grip c="w-[4px]" />
        {seq('ruler undo redo b1 b2 b3 b4 b5 b6 b7 b8 b9 b10 b10')}<I k="more" c="w-[34px] pl-[8px]" /><Grip c="w-[5px]" />
        <I k="hist" c="w-[20px]" /><I k="more" c="w-[34px] pl-[8px]" /><Grip c="w-[2px]" />{seq('addv addr addp adds addm addo addw')}<I k="more" c="w-[19px]" /><Grip c="w-[4px]" />
        {seq('bk1 bk2 bk3')}<span className="mx-px h-[22px] w-px shrink-0 bg-[#bbb]" />{seq('v1 v2 v3 v4 tools r1 r2')}
      </Bar>
      <div className="flex h-[575px] border-t border-[#d9d9d9]">
        <LeftPanel />
        <div className="flex w-[687px] flex-col">
          <MapView />
          <div className="flex h-[22px] items-center pl-[82px] text-[9px] leading-[12px]">
            <SBtn c="h-[15px] w-[14px]"><Mouse /></SBtn>
            <span className="ml-[6px] flex"><T w={18}>座標:</T></span>
            <div className="ml-[7px] flex h-[14px] w-[209px] items-center justify-center rounded-[2px] border border-[#c0c0c0] bg-white text-[8.500px]"><T w={64}>14918488,4084211</T></div>
            <span className="ml-[6px] flex"><T w={17}>縮尺</T></span>
            <div className="ml-[6px] flex h-[14px] w-[59px] items-center justify-between rounded-[2px] border border-[#c0c0c0] bg-white pl-[3px] text-[8.500px]"><T w={27}>1:27,912</T><span className="flex h-full w-[13px] items-center justify-center border-l border-[#c0c0c0] bg-[#f0f0f0]"><Dd c="w-[6px]" /></span></div>
          </div>
        </div>
      </div>
    </div>
  );
}

/* ---------- dialog ---------- */
const Radio = ({ on = false }: { on?: boolean }) => (
  <span className="-ml-px flex h-[13px] w-[13px] shrink-0 items-center justify-center rounded-full border border-[#c3c3c3] bg-[#fafafa]">{on && <span className="h-[7px] w-[7px] rounded-full bg-black" />}</span>
);
const Check = () => <span className="h-[13px] w-[13px] shrink-0 rounded-[1px] border border-[#c3c3c3] bg-[#fcfcfc]" />;
const Btn = ({ c, children }: { c: string; children: React.ReactNode }) => (
  <div className={'flex shrink-0 items-center justify-center rounded-[3px] border bg-gradient-to-b from-[#fdfdfd] to-[#e6e6e6] ' + c}>{children}</div>
);
const Combo = ({ c, focus = false, children }: { c: string; focus?: boolean; children: React.ReactNode }) => (
  <div className={'flex shrink-0 items-stretch rounded-[2px] border border-[#b9b9b9] bg-gradient-to-b from-[#fafafa] to-[#e4e4e4] ' + c}>
    <div className={'flex flex-1 items-center ' + (focus ? 'm-px border border-dotted border-black pl-[2px]' : 'pl-[4px]')}>{children}</div>
    <span className="flex w-[17px] items-center justify-center border-l border-[#c0c0c0]"><Dd c="w-[8px]" /></span>
  </div>
);
const Spin = ({ c, g = false, v }: { c: string; g?: boolean; v: string }) => (
  <div className={'flex shrink-0 rounded-[2px] border ' + (g ? 'border-[#a6a6a6] bg-[#f0f0f0] text-[#8a8a8a] ' : 'border-[#bbb] bg-white ') + c}>
    <div className="flex flex-1 items-center pl-[3px]"><T w={6}>{v}</T></div>
    <div className={'flex w-[16px] flex-col border-l bg-[#f0f0f0] ' + (g ? 'border-[#a6a6a6]' : 'border-[#bbb]')}>
      <span className={'flex flex-1 items-center justify-center border-b ' + (g ? 'border-[#a6a6a6]' : 'border-[#bbb]')}><svg viewBox="0 0 8 5" className="h-[4px] w-[8px]"><path d="M0 5H8L4 0Z" fill={g ? '#777' : '#000'} /></svg></span>
      <span className="flex flex-1 items-center justify-center"><svg viewBox="0 0 8 5" className="h-[4px] w-[8px]"><path d="M0 0H8L4 5Z" fill={g ? '#777' : '#000'} /></svg></span>
    </div>
  </div>
);
const Group = ({ t, w, c, children }: { t: string; w: number; c: string; children: React.ReactNode }) => (
  <div className={'relative w-[412px] shrink-0 rounded-[3px] border border-[#c2c2c2] ' + c}>
    <span className="absolute -top-[10px] left-[7px] flex bg-[#f0f0f0] px-[2px] leading-[16px]"><T w={w}><u>{t[0]}</u>{t.slice(1)}</T></span>
    {children}
  </div>
);
const SbBtn = ({ up = false }: { up?: boolean }) => (
  <span className="flex h-[16px] w-[16px] shrink-0 items-center justify-center rounded-[2px] border border-[#999] bg-[#f8f8f8]"><svg viewBox="0 0 8 5" className="h-[4px] w-[8px]"><path d={up ? 'M0 5H8L4 0Z' : 'M0 0H8L4 5Z'} fill="#000" /></svg></span>
);

const TREE: [string, number][] = [['World', 29], ['Controls', 44], ['DEM', 24], ['Additional DEM', 81], ['Point', 26], ['Line', 20], ['Polygon', 41]];

function Dialog() {
  return (
    <div className="absolute left-[628px] top-[227px] flex h-[569px] w-[761px] flex-col rounded-[7px] border border-[#0a1c3d] bg-[linear-gradient(180deg,#6d97d3_0px,#7ba1d9_70px,#a9c2e6_158px,#c4d5ee_162px,#1c5cb5_163px,#0f4ea8_380px,#1252ae_569px)] text-[12.500px] leading-[16px] text-black">
      <div className="flex h-full flex-col rounded-[6px] border border-[#bfd3ee]">
        <div className="flex h-[28px] shrink-0 items-center rounded-t-[5px] bg-[linear-gradient(90deg,#6f98d4_0px,#8fafdd_40px,#9bb7e0_80px,#7c9fd6_115px,#2a63ba_170px,#1150ac_270px,#1a5cba_330px,#0e4ca6_470px,#1452ae_560px,#2b62b7_640px,#7199d3_759px)]">
          <QLogo c="ml-[8px] mb-[1px] h-[15px] w-[15px]" />
          <span className="mb-[3px] ml-[6px] text-[13px]"><T w={77} c="text-[#101f3d]">Qgis2threejs</T></span>
          <div className="ml-auto mr-[5px] flex h-[20px] self-start overflow-hidden rounded-b-[4px] border border-t-0 border-[#2d4366] shadow-[0_0_0_1px_#a9c2e6]">
            <span className="flex w-[28px] items-center justify-center border-r border-[#2d4366] bg-[linear-gradient(180deg,#94aed5,#6d90c5_45%,#2f5b9e_50%,#5a84bd)]"><span className="mt-[5px] h-[5px] w-[12px] rounded-[1px] border border-[#445] bg-white" /></span>
            <span className="flex w-[28px] items-center justify-center border-r border-[#2d4366] bg-[linear-gradient(180deg,#8dabd8,#6d90c5_45%,#4772b4_50%,#6a90c5)]"><span className="h-[8px] w-[11px] border-2 border-[#a3bbdb]" /></span>
            <span className="flex w-[49px] items-center justify-center bg-[linear-gradient(180deg,#dc9a92,#c2523f_45%,#a41e10_50%,#cf5b41)]"><svg width="12" height="10" viewBox="0 0 12 10"><path d="M1.500 1L10.500 9M10.500 1L1.500 9" stroke="#333" strokeWidth="3.600" /><path d="M2 1.500L10 8.500M10 1.500L2 8.500" stroke="#fff" strokeWidth="2.300" /></svg></span>
          </div>
        </div>
        <div className="mx-[5px] mb-[5px] flex flex-1 flex-col border border-[#11356f] bg-[#f0f0f0] shadow-[0_0_0_1px_#8eb0e0]">
          <div className="mt-[11px] flex h-[20px] items-center pl-[12px]">
            <T w={69}>Template file</T>
            <Combo c="ml-[5px] h-[21px] w-[647px]"><T w={121}>3DViewer(dat-gui).html</T></Combo>
          </div>
          <div className="mt-[7px] flex h-[402px] pl-[12px]">
            <div className="flex w-[264px] shrink-0 rounded-[3px] border border-[#b5b5b5] bg-white">
              <div className="flex w-full flex-col pt-[1px] leading-[12px]">
                {TREE.map(([t, w], i) => (
                  <div key={t} className={'flex h-[12.45px] items-center ' + (i === 2 ? 'bg-[#f0f0f0]' : '')}>
                    <svg width="25" height="13" viewBox="0 0 25 13" className="shrink-0">
                      <path d={i === 6 ? 'M11.500 0V6.500' : 'M11.500 0V13'} stroke="#999" strokeDasharray="1 1" /><path d="M12 6.500H22" stroke="#999" strokeDasharray="1 1" />
                      {i === 3 && <><rect x="6.500" y="2.500" width="8" height="8" fill="#fff" stroke="#888" /><path d="M8 6.500H13M10.500 4V9" stroke="#444" /></>}
                    </svg>
                    <span className="flex h-[12px]"><T w={w}>{t}</T></span>
                  </div>
                ))}
              </div>
            </div>
            <div className="flex w-[7px] shrink-0 justify-center pt-[134px]"><span className="h-[126px] w-[4px] bg-[radial-gradient(circle_at_1px_1px,#c4c4c4_0.6px,transparent_1px)] bg-[length:3px_4px]" /></div>
            <div className="flex w-[451px] shrink-0 overflow-hidden rounded-[3px] border border-[#b5b5b5]">
              <div className="flex w-[421px] flex-col pl-[10px]">
                <div className="mt-[10px] flex h-[20px] shrink-0 items-center"><T w={57}>DEM Layer</T><Combo focus c="ml-[6px] h-[20px] w-[348px]"><T w={52}>megijima3</T></Combo></div>
                <Group t="Resampling" w={61} c="mt-[19px] h-[155px]">
                  <div className="flex flex-col pl-[11px]">
                    <div className="mt-[14px] flex h-[16px] items-center gap-[6px]"><Radio on /><T w={36}>Simple</T></div>
                    <div className="mt-[8px] flex h-[28px] pl-[8px]">
                      <svg width="292" height="28" viewBox="0 0 292 28">
                        <rect x="1.500" y="6.500" width="288" height="3" rx="1" fill="#f4f4f4" stroke="#999" />
                        {[7.5, 63.5, 118.5, 174, 229, 284.5].map((x) => <path key={x} d={`M${x} 20V24`} stroke="#888" />)}
                        <path d="M59 1.500H67L69 3.500V10.500L63.500 16L57.500 10.500V3.500Z" fill="#f4f4f4" stroke="#888" />
                      </svg>
                      <span className="ml-[19px] mt-[4px] flex"><T w={68}>224 x 180 px</T></span>
                    </div>
                    <div className="mt-[5px] flex h-[21px] items-center pl-[9px]"><T w={82}>Grid spacing: X</T><div className="ml-[4px] flex h-[21px] w-[138px] items-center rounded-[2px] border border-[#b9b9b9] bg-white pl-[3px]"><T w={77}>26.7195292253</T></div><span className="ml-[6px] flex"><T w={7}>Y</T></span><div className="ml-[5px] flex h-[21px] w-[137px] items-center rounded-[2px] border border-[#b9b9b9] bg-white pl-[3px]"><T w={71}>26.772481669</T></div></div>
                    <div className="mt-[6px] flex h-[20px] items-center pl-[10px]"><Check /><span className="ml-[4px] flex"><T w={69}>Surroundings</T></span><span className="ml-[11px] flex text-[#8a8a8a]"><T w={23}>Size</T></span><Spin g c="ml-[5px] h-[20px] w-[73px]" v="5" /><span className="ml-[7px] flex text-[#8a8a8a]"><T w={60}>Roughening</T></span><Spin g c="ml-[6px] h-[20px] w-[73px]" v="4" /></div>
                    <div className="mt-[9px] flex h-[16px] items-center gap-[7px]"><Radio /><T w={114}>Advanced (quad tree)</T></div>
                  </div>
                </Group>
                <Group t="Display type" w={66} c="mt-[17px] h-[200px]">
                  <div className="flex flex-col pl-[11px]">
                    <div className="mt-[15px] flex h-[16px] items-center gap-[7px]"><Radio on /><T w={98}>Map canvas image</T></div>
                    <div className="mt-[4px] flex h-[22px] items-center"><Radio /><span className="ml-[7px] flex"><T w={64}>Layer image</T></span><span className="ml-[114px] flex text-[#8a8a8a]"><T w={84}>0 layer selected</T></span><Btn c="ml-[5px] h-[22px] w-[102px] border-[#a9a9a9] text-[#8a8a8a]"><T w={86}>Select layer(s)...</T></Btn></div>
                    <div className="mt-[4px] flex h-[22px] items-center"><Radio /><span className="ml-[7px] flex"><T w={52}>Image file</T></span><div className="ml-[9px] h-[21px] w-[240px] rounded-[3px] border border-[#a6a6a6]" /><Btn c="ml-[4px] h-[22px] w-[64px] border-[#a9a9a9] text-[#8a8a8a]"><T w={46}>Browse...</T></Btn></div>
                    <div className="mt-[4px] flex h-[21px] items-center"><Radio /><span className="ml-[7px] flex"><T w={56}>Solid color</T></span><span className="ml-[130px] flex"><T w={28}>Color</T></span><div className="ml-[5px] flex h-[21px] w-[121px] items-center rounded-[3px] border border-[#a6a6a6] pl-[3px] text-[#b5b5b5]"><T w={45}>0xrrggbb</T></div><Btn c="ml-[4px] h-[21px] w-[25px] border-[#a9a9a9] text-[#8a8a8a]"><T w={7}>...</T></Btn></div>
                    <div className="mt-[8px] flex h-[20px] items-center"><T w={56}>Resolution</T><Combo c="ml-[60px] h-[20px] w-[272px]"><T w={113}>100 %&nbsp; (981 x 789 px)</T></Combo></div>
                    <div className="mt-[7px] flex h-[20px] items-center"><T w={90}>Transparency (%)</T><Spin c="ml-[26px] h-[19px] w-[112px]" v="0" /><span className="ml-[8px] flex"><Check /></span><span className="ml-[6px] flex"><T w={127}>Transparent background</T></span></div>
                    <div className="mt-[9px] flex h-[14px] items-center pl-px"><Check /><span className="ml-[6px] flex"><T w={80}>Enable shading</T></span></div>
                  </div>
                </Group>
              </div>
              <div className="ml-[10px] mt-[1px] flex w-[16px] flex-col bg-[#e9e9e9]">
                <SbBtn up />
                <span className="flex h-[242px] shrink-0 items-center justify-center rounded-[2px] border border-[#a5a5a5] bg-gradient-to-r from-[#fbfbfb] to-[#e9e9e9]"><span className="h-[20px] w-[11px] bg-[radial-gradient(circle_at_1px_1px,#b8b8b8_0.7px,transparent_1px)] bg-[length:4px_4px]" /></span>
                <span className="flex-1" /><SbBtn up /><SbBtn /><span className="h-[2px]" />
              </div>
            </div>
          </div>
          <div className="mt-[4px] flex h-[16px] items-center pl-[11px]"><T w={118}>Output HTML file path</T></div>
          <div className="mt-[3px] flex h-[22px] items-center pl-[12px]"><div className="flex h-[20px] w-[650px] items-center rounded-[2px] border border-[#b9b9b9] bg-white pl-[3px] text-[#777]"><T w={86}>[Temporary file]</T></div><Btn c="ml-[7px] h-[22px] w-[64px] border-[#999]"><T w={46}>Browse...</T></Btn></div>
          <div className="mt-[7px] flex h-[26px] items-center pl-[12px]">
            <Btn c="h-[26px] w-[27px] border-[#999]"><svg width="22" height="20" viewBox="0 0 22 20"><circle cx="10" cy="9.500" r="7" fill="none" stroke="#707070" strokeWidth="2.600" strokeDasharray="3 2.498" /><circle cx="10" cy="9.500" r="4.500" fill="none" stroke="#777" strokeWidth="3.200" /><circle cx="10" cy="9.500" r="1.500" fill="#777" /><path d="M14 15H20L17 18Z" fill="#000" /></svg></Btn>
            <Btn c="ml-[455px] h-[24px] w-[78px] border-[#8a8a8a]"><T w={20}>Run</T></Btn>
            <Btn c="ml-[3px] h-[24px] w-[78px] border-[#bbb]"><T w={30}>Close</T></Btn>
            <Btn c="ml-[3px] h-[24px] w-[78px] border-[#bbb]"><T w={23}>Help</T></Btn>
          </div>
        </div>
      </div>
    </div>
  );
}

export default function App() {
  return (
    <div className="relative h-[796px] w-[1389px] overflow-hidden bg-white font-['Noto_Sans_CJK_JP',sans-serif]">
      <MainWindow />
      <Dialog />
      <svg className="pointer-events-none absolute left-[530px] top-[60px]" width="180" height="235" viewBox="530 60 180 235">
        <path d="M543 72L683 270" stroke="#f00" strokeWidth="5.500" />
        <path d="M674 274L689 264L692 283Z" fill="#f00" />
      </svg>
    </div>
  );
}
